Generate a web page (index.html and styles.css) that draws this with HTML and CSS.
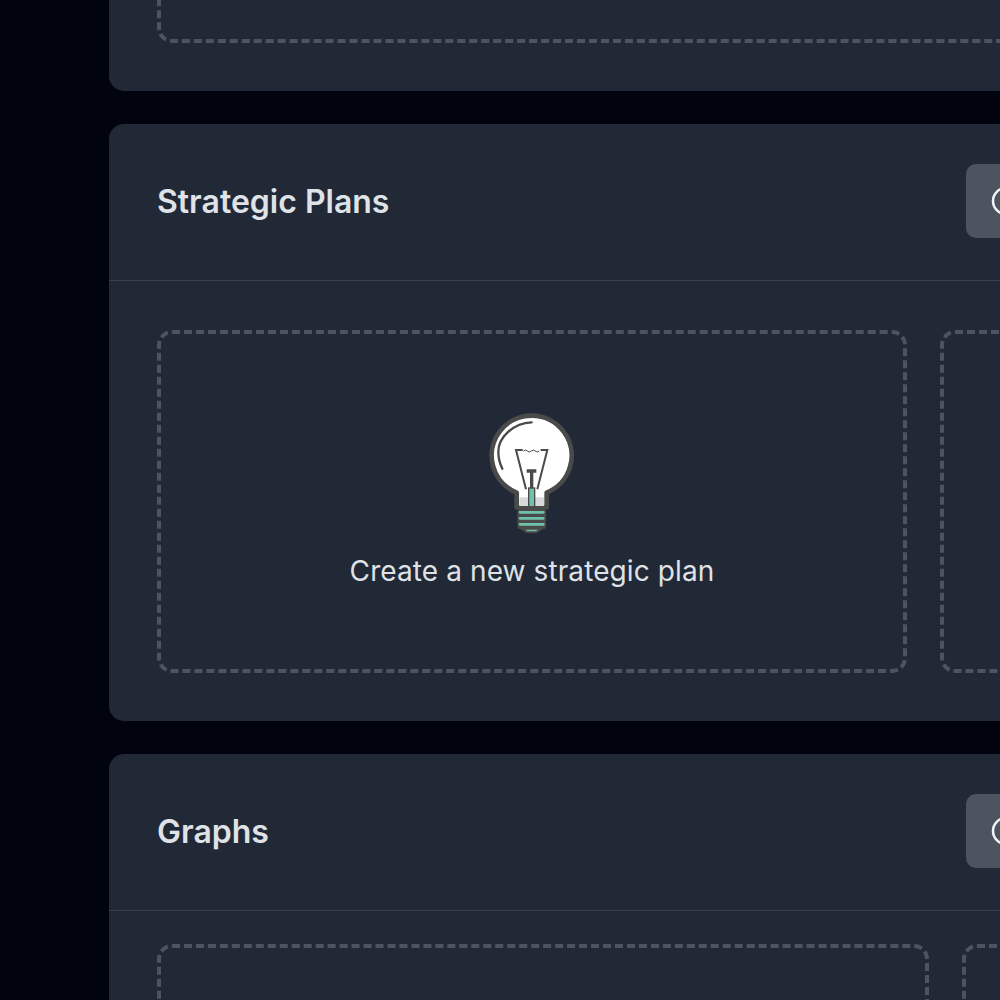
FILE: index.html
```html
<!DOCTYPE html>
<html lang="en">
<head>
  <meta charset="UTF-8">
  <title>Strategic Plans</title>
  <link rel="stylesheet" href="styles.css">
</head>
<body>
  <main class="content">
    <section class="card card-top">
      <div class="card-body">
        <div class="slots">
          <div class="slot"></div>
        </div>
      </div>
    </section>

    <section class="card">
      <header class="card-head">
        <h2>Strategic Plans</h2>
        <button class="add-btn" aria-label="Add">
          <svg width="30" height="30" viewBox="0 0 30 30"><circle cx="15" cy="15" r="13" fill="none" stroke="#f3f4f6" stroke-width="2.5"/></svg>
        </button>
      </header>
      <div class="card-body">
        <div class="slots slots-plans">
          <div class="slot">
            <svg class="bulb" width="90" height="124" viewBox="51 39 270 372">
              <path d="M140 278A120 120 0 1 1 230 278V322H140Z" fill="#fff" stroke="#4a4a4a" stroke-width="14" stroke-linejoin="round"/>
              <rect x="148" y="292" width="74" height="26" fill="#d9d9d9"/>
              <path d="M185 67C130 69 85 112 85 155C85 175 89 190 97 206" fill="none" stroke="#4a4a4a" stroke-width="7" stroke-linecap="round"/>
              <path d="M168 268L138 150H158M212 150H232L202 268" fill="none" stroke="#4a4a4a" stroke-width="6"/>
              <path d="M160 153q6-6 12 0t12 0t12 0t12 0" fill="none" stroke="#4a4a4a" stroke-width="3"/>
              <path d="M170 213H199M185 213V268" fill="none" stroke="#4a4a4a" stroke-width="10"/>
              <rect x="176" y="264" width="18" height="60" fill="#6fc1ac" stroke="#4a4a4a" stroke-width="4"/>
              <path d="M154 324H216" stroke="#4a4a4a" stroke-width="12"/>
              <rect x="142" y="328" width="86" height="60" rx="10" fill="#4a4a4a"/>
              <path d="M150 337H220M150 355H220M150 373H220" stroke="#6fc1ac" stroke-width="8" stroke-linecap="round"/>
              <path d="M155 386H215L198 397H172Z" fill="#6fc1ac" stroke="#4a4a4a" stroke-width="6" stroke-linejoin="round"/>
            </svg>
            <span class="slot-label">Create a new strategic plan</span>
          </div>
          <div class="slot"></div>
        </div>
      </div>
    </section>

    <section class="card">
      <header class="card-head">
        <h2>Graphs</h2>
        <button class="add-btn" aria-label="Add">
          <svg width="30" height="30" viewBox="0 0 30 30"><circle cx="15" cy="15" r="13" fill="none" stroke="#f3f4f6" stroke-width="2.5"/></svg>
        </button>
      </header>
      <div class="card-body card-body-tight">
        <div class="slots slots-graphs">
          <div class="slot"></div>
          <div class="slot"></div>
        </div>
      </div>
    </section>
  </main>
</body>
</html>
```

FILE: styles.css
```css
html, body {
  margin: 0;
  height: 1000px;
  overflow: hidden;
}

body {
  font-family: Inter, "Liberation Sans", sans-serif;
  background: #01040f;
}

.content {
  width: 1030px;
  margin-left: 109px;
  display: flex;
  flex-direction: column;
  gap: 33px;
}

.card {
  background: #212937;
  border-radius: 15px;
}

.card-top {
  margin-top: -349px;
}

.card-head {
  height: 154px;
  padding: 0 48px 2px;
  display: flex;
  align-items: center;
  justify-content: space-between;
  border-bottom: 1px solid #3a414e;
}

.card-head h2 {
  margin: 0;
  font-size: 32px;
  font-weight: 600;
  color: #dfe2e7;
}

.add-btn {
  width: 125px;
  height: 74px;
  padding: 0 0 0 25px;
  display: flex;
  align-items: center;
  background: #4c5460;
  border: none;
  border-radius: 10px;
}

.card-body {
  padding: 49px 48px 48px;
}

.card-body-tight {
  padding-top: 33px;
}

.slots {
  display: grid;
  grid-template-columns: 1fr;
  gap: 33px;
}

.slots-plans {
  grid-template-columns: 750px 750px;
}

.slots-graphs {
  grid-template-columns: 772px 772px;
}

.slot {
  box-sizing: border-box;
  height: 343px;
  display: flex;
  flex-direction: column;
  align-items: center;
  justify-content: center;
  gap: 14px;
  border: 4px dashed #4d5461;
  border-radius: 15px;
}

.slot-label {
  font-size: 28px;
  line-height: 40px;
  letter-spacing: 0.1px;
  color: #dfe2e7;
}
```
